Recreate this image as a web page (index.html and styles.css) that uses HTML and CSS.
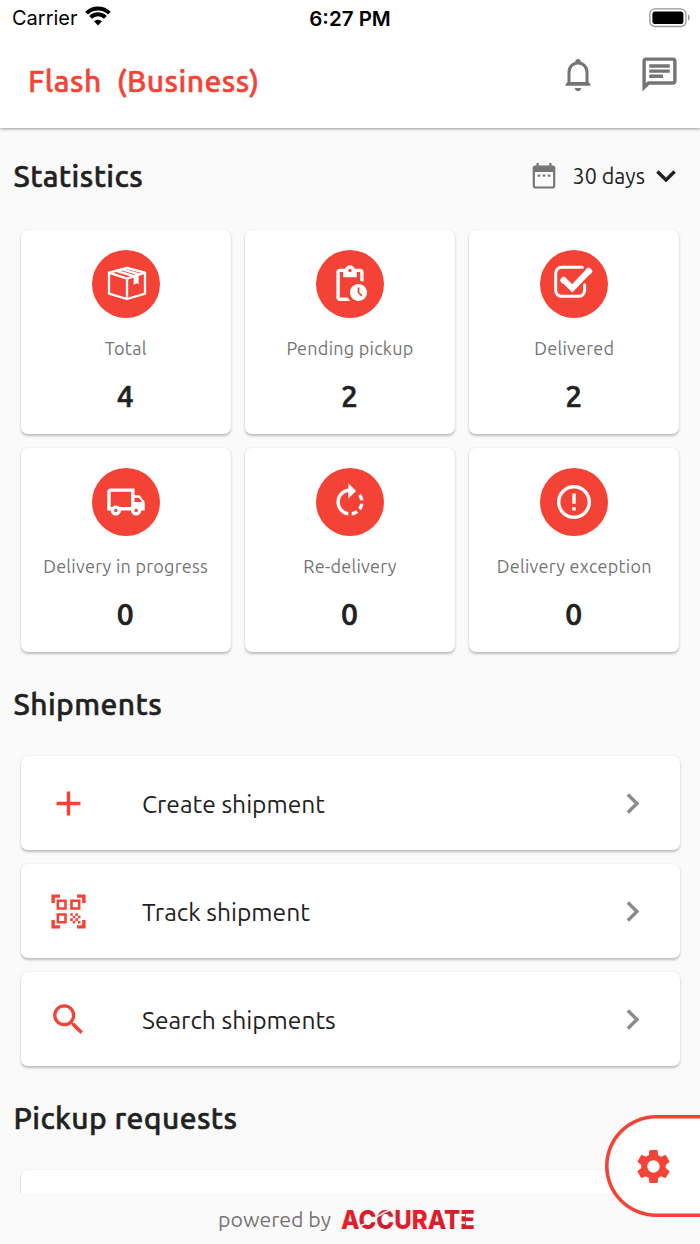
FILE: index.html
```html
<!DOCTYPE html>
<html lang="en">

<head>
    <meta charset="UTF-8">
    <meta name="viewport" content="width=device-width, initial-scale=1.0">
    <title>Flash (Business)</title>
    <link rel="stylesheet" href="styles.css">
</head>

<body>

<!-- Status bar -->
<div class="status-bar">
    <div class="carrier">
        <span class="carrier-name">Carrier</span>
        <svg class="wifi" viewBox="0 0 26 20">
            <path d="M1.6 7.2a16.2 16.2 0 0 1 22.8 0M5.6 11.4a10.4 10.4 0 0 1 14.8 0" fill="none" stroke="#000" stroke-width="3.9"/>
            <path d="M13 19.4l-4-4.1a5.8 5.8 0 0 1 8 0z"/>
        </svg>
    </div>
    <span class="time">6:27 PM</span>
    <div class="battery-wrap">
        <svg class="battery" viewBox="0 0 42 20">
            <rect x="0.9" y="0.9" width="36" height="17.6" rx="5" fill="none" stroke="#999" stroke-width="1.3"/>
            <rect x="3.4" y="3.4" width="31" height="12.6" rx="2.8"/>
            <path d="M39 6.6c2.2 1.2 2.2 5 0 6.2z" fill="#999"/>
        </svg>
    </div>
</div>

<!-- App bar -->
<header class="app-bar">
    <h1 class="app-title">Flash&nbsp; (Business)</h1>
    <div class="app-actions">
        <svg class="bell" viewBox="0 0 26 34">
            <path d="M4 26.2V14.4C4 8.9 7.8 5 13 5s9 3.9 9 9.4v11.8" fill="none" stroke="#757575" stroke-width="3"/>
            <path d="M10.3 4.8V3.6a2.7 2.7 0 0 1 5.4 0v1.2zM2.5 24h21l2 2.4v1.4H.5v-1.4zM9.6 30h6.8c-.4 1.9-1.6 3.2-3.4 3.2S10 31.9 9.6 30z" fill="#757575"/>
        </svg>
        <svg class="icon chat" viewBox="0 0 24 24"><path d="M4 4h16v12H5.17L4 17.17V4m0-2c-1.1 0-1.99.9-1.99 2L2 22l4-4h14c1.1 0 2-.9 2-2V4c0-1.1-.9-2-2-2H4zm2 10h8v2H6v-2zm0-3h12v2H6V9zm0-3h12v2H6V6z"/></svg>
    </div>
</header>

<main class="content">

    <!-- Statistics -->
    <div class="section-head">
        <h2>Statistics</h2>
        <div class="period">
            <svg class="calendar" viewBox="0 0 24 26">
                <path d="M4.5 0h2.3v2.5h10.4V0h2.3v2.5h1.2c1.5 0 2.6 1.1 2.6 2.6v17.8c0 1.5-1.1 2.6-2.6 2.6H3.3C1.8 25.5.7 24.4.7 22.9V5.1c0-1.5 1.1-2.6 2.6-2.6h1.2zM2.9 9v13.7c0 .4.3.7.7.7h16.8c.4 0 .7-.3.7-.7V9z" fill="#757575" fill-rule="evenodd"/>
                <path d="M5.7 11.5h2.4v2.2H5.7zm5.1 0h2.4v2.2h-2.4zm5.1 0h2.4v2.2h-2.4z" fill="#757575"/>
            </svg>
            <span class="period-text">30 days</span>
            <svg class="arrow-down" viewBox="0 0 20 12"><path d="M1.4 1.5L10 10l8.6-8.5" fill="none" stroke="#212121" stroke-width="3.4"/></svg>
        </div>
    </div>

    <section class="stats">
        <div class="stat-card">
            <svg class="badge" viewBox="0 0 204 204">
                <circle cx="102" cy="102" r="102"/>
                <g fill="none" stroke="#fff" stroke-width="7" stroke-linejoin="round">
                    <path d="M105 54L51 68v63l54 16 54-16V68z"/>
                    <path d="M51 68l54 18 54-18M105 86v61M71 62l57 17M87 57l54 16"/>
                </g>
                <path class="glyph" d="M125 79l15-6v29l-7-2-8 5z"/>
            </svg>
            <p class="stat-label">Total</p>
            <p class="stat-value">4</p>
        </div>
        <div class="stat-card">
            <svg class="badge" viewBox="0 0 204 204">
                <circle cx="102" cy="102" r="102"/>
                <path class="glyph" transform="translate(40.8 40.8) scale(5.1)" d="M17 12c-2.76 0-5 2.24-5 5s2.24 5 5 5 5-2.24 5-5-2.24-5-5-5zm1.65 7.35L16.5 17.2V14h1v2.79l1.85 1.85-.7.71zM18 3h-3.18C14.4 1.84 13.3 1 12 1s-2.4.84-2.82 2H6c-1.1 0-2 .9-2 2v15c0 1.1.9 2 2 2h6.11c-.59-.57-1.07-1.25-1.42-2H6V5h2v3h8V5h2v5.08c.71.1 1.38.31 2 .6V5c0-1.1-.9-2-2-2zm-6 2c-.55 0-1-.45-1-1s.45-1 1-1 1 .45 1 1-.45 1-1 1z"/>
            </svg>
            <p class="stat-label">Pending pickup</p>
            <p class="stat-value">2</p>
        </div>
        <div class="stat-card">
            <svg class="badge" viewBox="0 0 204 204">
                <circle cx="102" cy="102" r="102"/>
                <path d="M127 52H65a18 18 0 0 0-18 18v51a18 18 0 0 0 18 18h51a18 18 0 0 0 18-18v-17" fill="none" stroke="#fff" stroke-width="9" stroke-linecap="round"/>
                <path d="M69 88l28 27 51-54" fill="none" stroke="#fff" stroke-width="18" stroke-linejoin="miter"/>
                <path class="glyph" d="M141 55q5-5 10 0l4 4q5 5 0 10l-8 7-13-13zM75 82q-4-5-9 0l-4 5q-4 4 0 8l7 7 13-13z"/>
            </svg>
            <p class="stat-label">Delivered</p>
            <p class="stat-value">2</p>
        </div>
        <div class="stat-card">
            <svg class="badge" viewBox="0 0 204 204">
                <circle cx="102" cy="102" r="102"/>
                <path class="glyph" transform="translate(40.8 40.8) scale(5.1)" d="M20 8h-3V4H3c-1.1 0-2 .9-2 2v11h2c0 1.66 1.34 3 3 3s3-1.34 3-3h6c0 1.66 1.34 3 3 3s3-1.34 3-3h2v-5l-3-4zm-.5 1.5l1.96 2.5H17V9.5h2.5zM6 18c-.55 0-1-.45-1-1s.45-1 1-1 1 .45 1 1-.45 1-1 1zm2.22-3c-.55-.61-1.33-1-2.22-1s-1.67.39-2.22 1H3V6h12v9H8.22zM18 18c-.55 0-1-.45-1-1s.45-1 1-1 1 .45 1 1-.45 1-1 1z"/>
            </svg>
            <p class="stat-label">Delivery in progress</p>
            <p class="stat-value">0</p>
        </div>
        <div class="stat-card">
            <svg class="badge" viewBox="0 0 204 204">
                <circle cx="102" cy="102" r="102"/>
                <path class="glyph" transform="translate(40.8 40.8) scale(5.1)" d="M15.55 5.55L11 1v3.07C7.06 4.56 4 7.92 4 12s3.05 7.44 7 7.93v-2.02c-2.84-.48-5-2.94-5-5.91s2.16-5.43 5-5.91V10l4.55-4.45zM19.93 11c-.17-1.39-.72-2.73-1.62-3.89l-1.42 1.42c.54.75.88 1.6 1.02 2.47h2.02zM13 17.9v2.02c1.39-.17 2.74-.71 3.9-1.61l-1.44-1.44c-.75.54-1.59.89-2.46 1.03zm3.89-2.42l1.42 1.41c.9-1.16 1.45-2.5 1.62-3.89h-2.02c-.14.87-.48 1.72-1.02 2.48z"/>
            </svg>
            <p class="stat-label">Re-delivery</p>
            <p class="stat-value">0</p>
        </div>
        <div class="stat-card">
            <svg class="badge" viewBox="0 0 204 204">
                <circle cx="102" cy="102" r="102"/>
                <path class="glyph" transform="translate(40.8 40.8) scale(5.1)" d="M11 15h2v2h-2v-2zm0-8h2v6h-2V7zm.99-5C6.47 2 2 6.48 2 12s4.47 10 9.99 10C17.52 22 22 17.52 22 12S17.52 2 11.99 2zM12 20c-4.42 0-8-3.58-8-8s3.58-8 8-8 8 3.58 8 8-3.58 8-8 8z"/>
            </svg>
            <p class="stat-label">Delivery exception</p>
            <p class="stat-value">0</p>
        </div>
    </section>

    <!-- Shipments -->
    <h2 class="section-title">Shipments</h2>
    <section class="actions">
        <a href="#" class="action">
            <svg class="icon red" viewBox="0 0 24 24"><path d="M19 13h-6v6h-2v-6H5v-2h6V5h2v6h6v2z"/></svg>
            <span class="action-text">Create shipment</span>
            <svg class="icon chevron" viewBox="0 0 24 24"><path d="M10 6L8.59 7.41 13.17 12l-4.58 4.59L10 18l6-6z"/></svg>
        </a>
        <a href="#" class="action">
            <svg class="icon red" viewBox="0 0 24 24"><path d="M9.5,6.5v3h-3v-3H9.5 M11,5H5v6h6V5L11,5z M9.5,14.5v3h-3v-3H9.5 M11,13H5v6h6V13L11,13z M17.5,6.5v3h-3v-3H17.5 M19,5h-6v6h6V5L19,5z M13,13h1.5v1.5H13V13z M14.5,14.5H16V16h-1.5V14.5z M16,13h1.5v1.5H16V13z M13,16h1.5v1.5H13V16z M14.5,17.5H16V19h-1.5V17.5z M16,16h1.5v1.5H16V16z M17.5,14.5H19V16h-1.5V14.5z M17.5,17.5H19V19h-1.5V17.5z M22,7h-2V4h-3V2h5V7z M22,22v-5h-2v3h-3v2H22z M2,22h5v-2H4v-3H2V22z M2,2v5h2V4h3V2H2z"/></svg>
            <span class="action-text">Track shipment</span>
            <svg class="icon chevron" viewBox="0 0 24 24"><path d="M10 6L8.59 7.41 13.17 12l-4.58 4.59L10 18l6-6z"/></svg>
        </a>
        <a href="#" class="action">
            <svg class="icon red" viewBox="0 0 24 24"><path d="M15.5 14h-.79l-.28-.27C15.41 12.59 16 11.11 16 9.5 16 5.91 13.09 3 9.5 3S3 5.91 3 9.5 5.91 16 9.5 16c1.61 0 3.09-.59 4.23-1.57l.27.28v.79l5 4.99L20.49 19l-4.99-5zm-6 0C7.01 14 5 11.99 5 9.5S7.01 5 9.5 5 14 7.01 14 9.5 11.99 14 9.5 14z"/></svg>
            <span class="action-text">Search shipments</span>
            <svg class="icon chevron" viewBox="0 0 24 24"><path d="M10 6L8.59 7.41 13.17 12l-4.58 4.59L10 18l6-6z"/></svg>
        </a>
    </section>

    <!-- Pickup requests -->
    <h2 class="section-title">Pickup requests</h2>
    <section class="actions">
        <div class="action"></div>
    </section>

</main>

<footer class="footer">
    <span class="powered">powered by</span>
    <svg class="brand" viewBox="0 0 136 28">
        <defs>
            <linearGradient id="brandRed" x1="0" y1="0" x2="1" y2="0">
                <stop offset="0" stop-color="#ee1c2b"/>
                <stop offset="0.3" stop-color="#c9202f"/>
                <stop offset="0.55" stop-color="#ee1c2b"/>
                <stop offset="0.8" stop-color="#d01f2e"/>
                <stop offset="1" stop-color="#e01c2b"/>
            </linearGradient>
        </defs>
        <text x="1" y="23.5" textLength="134" lengthAdjust="spacingAndGlyphs" fill="url(#brandRed)">ACCURATE</text>
        <!-- slash through the two Cs and the cuts in the E -->
        <path d="M20 21q10-4 17-9t13-7" fill="none" stroke="#fafafa" stroke-width="1.4"/>
        <path d="M118 8.9h7v2.300h-7zm0 7.500h7v2.300h-7z" fill="#fafafa"/>
    </svg>
</footer>

<button class="settings" aria-label="Settings">
    <svg class="icon red" viewBox="0 0 24 24"><path d="M19.14 12.94c.04-.3.06-.61.06-.94 0-.32-.02-.64-.07-.94l2.03-1.58c.18-.14.23-.41.12-.61l-1.92-3.32c-.12-.22-.37-.29-.59-.22l-2.39.96c-.5-.38-1.03-.7-1.62-.94l-.36-2.54c-.04-.24-.24-.41-.48-.41h-3.84c-.24 0-.43.17-.47.41l-.36 2.54c-.59.24-1.13.57-1.62.94l-2.39-.96c-.22-.08-.47 0-.59.22L2.74 8.87c-.12.21-.08.47.12.61l2.03 1.58c-.05.3-.09.63-.09.94s.02.64.07.94l-2.03 1.58c-.18.14-.23.41-.12.61l1.92 3.32c.12.22.37.29.59.22l2.39-.96c.5.38 1.03.7 1.62.94l.36 2.54c.05.24.24.41.48.41h3.84c.24 0 .44-.17.47-.41l.36-2.54c.59-.24 1.13-.56 1.62-.94l2.39.96c.22.08.47 0 .59-.22l1.92-3.32c.12-.22.07-.47-.12-.61l-2.01-1.58zM12 15.6c-1.98 0-3.6-1.62-3.6-3.6s1.62-3.6 3.6-3.6 3.6 1.62 3.6 3.6-1.62 3.6-3.6 3.6z"/></svg>
</button>

</body>

</html>
```
FILE: styles.css
```css
* {
    margin: 0;
    padding: 0;
    box-sizing: border-box;
}

body {
    font-family: Ubuntu, 'Noto Sans', sans-serif;
    background-color: #fafafa;
    color: #212121;
    height: 1244px;
    overflow: hidden;
    display: flex;
    flex-direction: column;
}

svg {
    display: block;
    flex-shrink: 0;
}

/* Status bar */
.status-bar {
    position: relative;
    z-index: 1;
    height: 37px;
    padding: 0 9px 1px 12px;
    display: grid;
    grid-template-columns: 1fr auto 1fr;
    align-items: center;
    background-color: white;
    color: black;
    font-family: Inter, sans-serif;
    font-size: 20px;
}

.carrier {
    display: flex;
    align-items: center;
    gap: 7px;
}

.wifi {
    width: 26px;
    height: 20px;
    margin-top: -4px;
}

.time {
    margin-right: 3px;
    font-size: 20.5px;
    font-weight: 600;
}

.battery-wrap {
    display: flex;
    justify-content: flex-end;
}

.battery {
    width: 42px;
    height: 20px;
    margin-top: -1px;
}

/* App bar */
.app-bar {
    height: 91px;
    flex-shrink: 0;
    padding: 0 20px 0 28px;
    display: flex;
    justify-content: space-between;
    background-color: white;
    box-shadow: 0 1px 3px rgba(0, 0, 0, 0.4);
}

.app-title {
    color: #f44336;
    font-size: 30px;
    font-weight: 500;
    line-height: 89px;
    letter-spacing: 0.45px;
    -webkit-text-stroke: 0.5px;
}

.app-actions {
    display: flex;
    align-items: flex-start;
    gap: 48px;
    padding-top: 17px;
}

.icon {
    width: 41px;
    height: 41px;
}

.bell {
    width: 26px;
    height: 34px;
    margin-top: 4px;
}

.chat {
    fill: #757575;
}

.red {
    fill: #f44336;
}

/* Content */
.content {
    flex: 1;
    min-height: 0;
    overflow: hidden;
    padding: 0 20.5px;
}

h2 {
    font-size: 30px;
    font-weight: 500;
    line-height: 40px;
    letter-spacing: 0.4px;
    margin-left: -7px;
    -webkit-text-stroke: 0.5px;
}

.section-head {
    height: 102px;
    padding: 28px 3.5px 0 0;
    display: flex;
    justify-content: space-between;
}

.period {
    height: 40px;
    display: flex;
    align-items: center;
}

.calendar {
    width: 24px;
    height: 26px;
    margin-right: 17px;
}

.period-text {
    font-size: 21.5px;
    margin-right: 11px;
}

.arrow-down {
    width: 20px;
    height: 12px;
}

.stats {
    display: grid;
    grid-template-columns: repeat(3, 1fr);
    gap: 14px;
}

.stat-card,
.action {
    background-color: white;
    border-radius: 7px;
    box-shadow: 0 1.5px 2.5px rgba(0, 0, 0, 0.25);
}

.stat-card {
    height: 204px;
    padding-top: 20px;
    display: flex;
    flex-direction: column;
    align-items: center;
}

.badge {
    width: 68px;
    height: 68px;
    fill: #f44336;
}

.glyph {
    fill: white;
}

.stat-label {
    margin-top: 17px;
    font-size: 18px;
    line-height: 26px;
    letter-spacing: 0.26px;
    color: #757575;
    white-space: nowrap;
}

.stat-value {
    margin-top: 15px;
    margin-right: 1px;
    font-size: 30px;
    font-weight: 500;
    line-height: 40px;
    -webkit-text-stroke: 0.7px;
}

.section-title {
    margin-top: 32px;
    margin-bottom: 32px;
}

.actions {
    display: flex;
    flex-direction: column;
    gap: 14px;
}

.action {
    height: 94px;
    padding: 0 27px;
    display: flex;
    align-items: center;
    color: #212121;
    text-decoration: none;
}

.action-text {
    flex: 1;
    margin-left: 53.5px;
    padding-top: 1px;
    font-size: 24.6px;
}

.chevron {
    fill: #8a8a8a;
}

/* Footer */
.footer {
    height: 51px;
    flex-shrink: 0;
    display: flex;
    justify-content: center;
    align-items: center;
    gap: 9px;
    padding-right: 6px;
}

.powered {
    font-size: 21.3px;
    color: #757575;
}

.brand {
    width: 136px;
    height: 28px;
}

.brand text {
    font-family: Inter, sans-serif;
    font-size: 26px;
    font-weight: 800;
}

.settings {
    position: absolute;
    top: 1115px;
    left: 605px;
    width: 110px;
    height: 102px;
    padding-left: 28px;
    display: flex;
    align-items: center;
    background-color: white;
    border: none;
    border-radius: 51px 0 0 51px;
    box-shadow: inset 0 0 0 3.6px #f44336;
}
```
